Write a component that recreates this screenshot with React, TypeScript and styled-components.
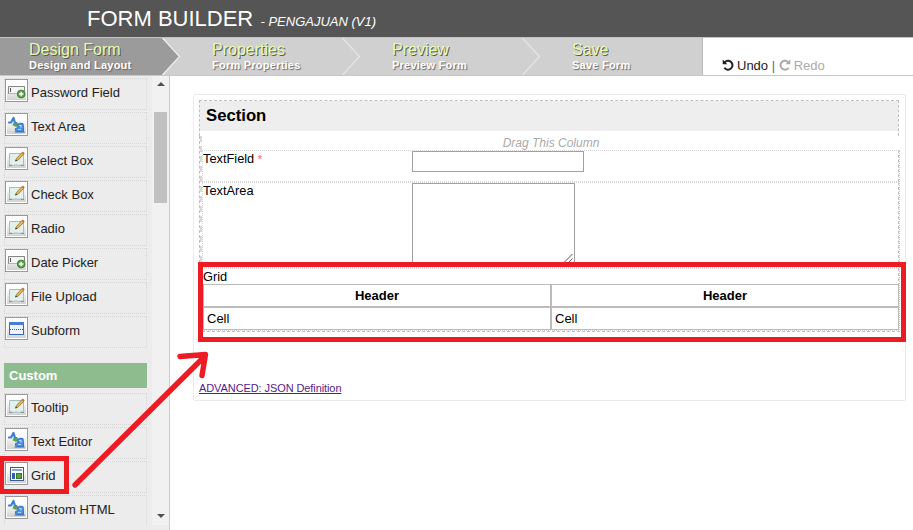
import React from "react";
import styled, { createGlobalStyle, css } from "styled-components";

const GlobalStyle = createGlobalStyle`
  * { box-sizing: border-box; }
  html, body { margin: 0; padding: 0; overflow: hidden; }
  body { background: #fff; color: #000; font-family: "Liberation Sans", Arial, sans-serif; font-size: 13px; }
`;

const Page = styled.div`
  position: relative;
  display: flex;
  flex-direction: column;
  width: 913px;
  height: 530px;
  overflow: hidden;
`;

const Header = styled.header`
  height: 37px;
  flex: none;
  padding-left: 87px;
  background: #555;
  color: #fff;
  font-size: 22px;
  line-height: 37px;
  white-space: pre;
`;

const FormName = styled.em`
  font-size: 13px;
`;

const Nav = styled.nav`
  display: flex;
  flex: none;
  height: 39px;
  border-top: 1px solid #c3c3c3;
  border-bottom: 1px solid #c8c8c8;
`;

const Step = styled.div<{ $width: number; $indent: number; $active?: boolean }>`
  display: flex;
  width: ${(p) => p.$width}px;
  padding-left: ${(p) => p.$indent}px;
  justify-content: space-between;
  background: ${(p) => (p.$active ? "#9b9b9b" : "#d0d0d0")};
`;

const StepText = styled.div`
  display: flex;
  flex-direction: column;
  padding-top: 3px;
  white-space: nowrap;
`;

const StepTitle = styled.span`
  color: #e9fbb0;
  font-size: 16px;
  line-height: 17px;
  text-shadow: 1px 1px 0 #555;
`;

const StepNote = styled.span`
  color: #fff;
  font-size: 11px;
  font-weight: bold;
  line-height: 14px;
  letter-spacing: 0.24px;
  text-shadow: 1px 1px 1px #666;
`;

const History = styled.div`
  display: flex;
  align-items: center;
  flex: 1;
  border-left: 1px solid #bbb;
  padding: 17px 0 0 19px;
  font-size: 13px;
  white-space: pre;
  color: #666;
`;

const HistoryButton = styled.span<{ $off?: boolean }>`
  display: flex;
  align-items: center;
  gap: 3px;
  color: ${(p) => (p.$off ? "#aaa" : "#222")};
`;

const Body = styled.div`
  display: flex;
  flex: 1;
  min-height: 0;
`;

const Sidebar = styled.aside`
  display: flex;
  flex: none;
  width: 170px;
  padding-bottom: 5px;
  background: #ececec;
  border-right: 1px solid #ccc;
`;

const Palette = styled.div`
  display: flex;
  flex-direction: column;
  gap: 2px;
  width: 152px;
  padding: 2px 5px 0 4px;
  overflow: hidden;
`;

const Tool = styled.div`
  display: flex;
  flex: none;
  height: 32px;
  border: 1px dotted #d6d6d6;
  font-size: 13px;
  line-height: 27px;
  color: #222;
  gap: 3px;
  white-space: nowrap;
`;

const ToolIcon = styled.span`
  display: flex;
  align-items: center;
  justify-content: center;
  flex: none;
  width: 23px;
  height: 23px;
  border: 1px solid #999;
  padding: 1px;
  background: linear-gradient(#fdfdfd 30%, #d2d2d2) content-box, #fff;
`;

const GroupTitle = styled.h2`
  flex: none;
  height: 25px;
  margin: 13px 0 3px;
  padding-left: 5px;
  background: #8fbc8f;
  color: #fff;
  font-size: 13px;
  line-height: 25px;
`;

const ScrollTrack = styled.div`
  display: flex;
  flex-direction: column;
  align-items: center;
  width: 17px;
  background: #f1f1f1;
`;

const ScrollArrow = styled.span<{ $down?: boolean }>`
  width: 0;
  height: 0;
  margin: ${(p) => (p.$down ? "auto 0 7px" : "6px 0 0")};
  border: 4px solid transparent;
  ${(p) =>
    p.$down
      ? css`border-top-color: #505050; border-bottom: 0;`
      : css`border-bottom-color: #505050; border-top: 0;`}
`;

const Thumb = styled.div`
  width: 13px;
  height: 91px;
  margin-top: 26px;
  background: #c1c1c1;
`;

const Main = styled.main`
  flex: 1;
  padding: 18px 8px 0 23px;
`;

const Canvas = styled.div`
  height: 307px;
  padding: 5px;
  border: 1px solid #ebebeb;
  border-radius: 2px;
`;

const SectionHead = styled.div`
  width: 700px;
  height: 36px;
  border: 1px dashed #c0c0c0;
  border-bottom: 0;
`;

const SectionTitle = styled.h1`
  height: 30px;
  margin: 0;
  padding-left: 6px;
  background: #eee;
  font-size: 16.7px;
  line-height: 29px;
`;

const Column = styled.div`
  width: 701px;
  border-left: 1px dashed #c0c0c0;
  padding-left: 0;
`;

const ColumnInner = styled.div`
  border-left: 2px dashed #d8d8d8;
`;

const DragHint = styled.div`
  height: 14px;
  color: #aaa;
  font-size: 12px;
  font-style: italic;
  line-height: 14px;
  text-align: center;
`;

const Fields = styled.div`
  border-right: 1px dotted #c8c8c8;
  border-bottom: 1px dashed #c0c0c0;
`;

const Field = styled.div<{ $height: number }>`
  display: flex;
  height: ${(p) => p.$height}px;
  border: 1px dotted #d6d6d6;
  border-right: 1px dashed #c0c0c0;
`;

const Label = styled.label`
  width: 209px;
  font-size: 12.8px;
  line-height: 15px;
`;

const Required = styled.span`
  color: #ff5a6a;
  font-size: 11px;
`;

const TextInput = styled.input`
  width: 172px;
  height: 21px;
  border: 1px solid #a0a0a0;
`;

const TextBox = styled.div`
  display: flex;
  align-items: flex-end;
  justify-content: flex-end;
  width: 163px;
  height: 82px;
  padding: 1px;
  border: 1px solid #a0a0a0;
`;

const GridField = styled(Field)`
  flex-direction: column;
`;

const GridTable = styled.div`
  display: grid;
  grid-template-columns: 348px 348px;
  grid-auto-rows: 23px;
`;

const GridCell = styled.div<{ $head?: boolean }>`
  border: 1px solid #bbb;
  padding: 0 3px;
  font-size: 13px;
  line-height: 21px;
  font-weight: ${(p) => (p.$head ? "bold" : "normal")};
  text-align: ${(p) => (p.$head ? "center" : "left")};
`;

const Advanced = styled.a`
  display: inline-block;
  margin-top: 50px;
  color: #551a8b;
  font-size: 11px;
  letter-spacing: -0.09px;
  text-decoration: underline;
`;

const RedBox = styled.div<{ $x: number; $y: number; $w: number; $h: number }>`
  position: absolute;
  left: ${(p) => p.$x}px;
  top: ${(p) => p.$y}px;
  width: ${(p) => p.$w}px;
  height: ${(p) => p.$h}px;
  border: 5px solid #ed1c24;
`;

const ArrowLayer = styled.svg`
  position: absolute;
  left: 0;
  top: 0;
  pointer-events: none;
`;

const StepArrow = ({ active }: { active?: boolean }) => (
  <svg width="19" height="37" viewBox="0 0 19 37">
    {active && <path d="M0 0H19V37H0L18 18.5Z" fill="#d0d0d0" />}
    <path d="M.5 0L17.5 18.5L.5 37" fill="none" stroke={active ? "#f0f0f0" : "#e6e6e6"} strokeWidth="1.2" />
  </svg>
);

const HistoryIcon = ({ flip }: { flip?: boolean }) => (
  <svg width="12" height="12" viewBox="0 0 12 12">
    <g transform={flip ? "translate(12 0) scale(-1 1)" : undefined}>
      <path d="M2.4 3.5A4.5 4.5 0 1 1 2.3 8.8" fill="none" stroke="currentColor" strokeWidth="2" />
      <path d="M.7 .6V5.3H5.4Z" fill="currentColor" />
    </g>
  </svg>
);

type IconKind = "input" | "text" | "edit" | "subform" | "grid";

const Glyph = ({ kind }: { kind: IconKind }) => {
  if (kind === "input")
    return (
      <svg width="19" height="19" viewBox="0 0 19 19">
        <path d="M1 5H18V13H1Z" fill="#f4f4f4" />
        <path d="M1.5 13V5.5H17.5V10" fill="none" stroke="#858585" />
        <path d="M3.5 7V11" stroke="#555" />
        <path d="M1.5 12.5H11" stroke="#b5b5b5" />
        <circle cx="14.2" cy="13" r="3.9" fill="#5aa046" stroke="#38752b" strokeWidth=".8" />
        <path d="M14.2 10.7V15.3M11.9 13H16.5" stroke="#fff" strokeWidth="1.5" />
      </svg>
    );
  if (kind === "text")
    return (
      <svg width="19" height="19" viewBox="0 0 19 19">
        <path d="M2 7.5H4L6.5 3L8 8H9.5" fill="none" stroke="#3e7fd0" strokeWidth="2.2" strokeLinecap="round" strokeLinejoin="round" />
        <path d="M6 9L9 10.5L11 9" fill="none" stroke="#5da64c" strokeWidth="2.6" />
        <path d="M10.5 9.5Q12 7.5 16 8.5L16.5 12.5V16.5H10.5Q7.5 16 8.5 13.5L11 12.5Z" fill="#4c90df" stroke="#2f72c8" strokeLinejoin="round" />
        <path d="M12 10.5H14V12.5M11 14.5H14" fill="none" stroke="#b4d6fa" strokeWidth="1.2" />
        <path d="M7.5 17H17.5" stroke="#3478cc" strokeWidth="1.2" />
      </svg>
    );
  if (kind === "edit")
    return (
      <svg width="19" height="19" viewBox="0 0 19 19">
        <path d="M2.5 4.5H16.5V16.5L14.5 15.8L12 16.5L9 15.8L6 16.5L4 15.8L2.5 16.5Z" fill="#e3f1ee" stroke="#a7bcbc" />
        <path d="M2 16.5H5M14 16.5H17" stroke="#7e9998" />
        <path d="M8.7 12L9.3 9.8L15 3.5L16.8 5.2L11 11.2Z" fill="#edbd4c" stroke="#8f6a2b" strokeWidth=".8" />
        <path d="M14.7 3.7L15.9 2.5L17.8 4.2L16.7 5.4Z" fill="#bd704c" />
        <path d="M8.2 12.5L10 11.7L8.9 10.5Z" fill="#333" />
      </svg>
    );
  if (kind === "subform")
    return (
      <svg width="19" height="19" viewBox="0 0 19 19">
        <rect x="2.5" y="3.5" width="14" height="12" fill="#eef3fb" stroke="#3867b3" />
        <path d="M2 4.5H17" stroke="#477fd1" strokeWidth="3" />
        <path d="M3 10.5H16" stroke="#555" strokeDasharray="1 1" />
      </svg>
    );
  return (
    <svg width="19" height="19" viewBox="0 0 19 19">
      <rect x="3.5" y="3.5" width="13" height="13" fill="#fff" stroke="#3c5791" />
      <rect x="5" y="5" width="10" height="2" fill="#83a9dc" />
      <rect x="5" y="9" width="3" height="6" fill="#315eae" />
      <rect x="9.5" y="9.5" width="5" height="5" fill="#55a447" stroke="#347a2d" />
    </svg>
  );
};

const basicTools: [string, IconKind][] = [
  ["Password Field", "input"],
  ["Text Area", "text"],
  ["Select Box", "edit"],
  ["Check Box", "edit"],
  ["Radio", "edit"],
  ["Date Picker", "input"],
  ["File Upload", "edit"],
  ["Subform", "subform"],
];

const customTools: [string, IconKind][] = [
  ["Tooltip", "edit"],
  ["Text Editor", "text"],
  ["Grid", "grid"],
  ["Custom HTML", "text"],
];

const steps = [
  { title: "Design Form", note: "Design and Layout", width: 181, indent: 29, active: true },
  { title: "Properties", note: "Form Properties", width: 180, indent: 31 },
  { title: "Preview", note: "Preview Form", width: 180, indent: 31 },
  { title: "Save", note: "Save Form", width: 161, indent: 31 },
];

const ToolItem = ({ name, kind }: { name: string; kind: IconKind }) => (
  <Tool>
    <ToolIcon><Glyph kind={kind} /></ToolIcon>
    {name}
  </Tool>
);

export default function App() {
  return (
    <Page>
      <GlobalStyle />
      <Header>FORM BUILDER<FormName>{"  - PENGAJUAN (V1)"}</FormName></Header>
      <Nav>
        {steps.map((s, i) => (
          <Step key={s.title} $width={s.width} $indent={s.indent} $active={s.active}>
            <StepText>
              <StepTitle>{s.title}</StepTitle>
              <StepNote>{s.note}</StepNote>
            </StepText>
            {i < 3 && <StepArrow active={s.active} />}
          </Step>
        ))}
        <History>
          <HistoryButton><HistoryIcon />Undo</HistoryButton>
          {" | "}
          <HistoryButton $off><HistoryIcon flip />Redo</HistoryButton>
        </History>
      </Nav>
      <Body>
        <Sidebar>
          <Palette>
            {basicTools.map(([name, kind]) => <ToolItem key={name} name={name} kind={kind} />)}
            <GroupTitle>Custom</GroupTitle>
            {customTools.map(([name, kind]) => <ToolItem key={name} name={name} kind={kind} />)}
          </Palette>
          <ScrollTrack>
            <ScrollArrow />
            <Thumb />
            <ScrollArrow $down />
          </ScrollTrack>
        </Sidebar>
        <Main>
          <Canvas>
            <SectionHead><SectionTitle>Section</SectionTitle></SectionHead>
            <Column>
              <ColumnInner>
                <DragHint>Drag This Column</DragHint>
                <Fields>
                  <Field $height={32}>
                    <Label>TextField <Required>*</Required></Label>
                    <TextInput />
                  </Field>
                  <Field $height={86}>
                    <Label>TextArea</Label>
                    <TextBox>
                      <svg width="9" height="9" viewBox="0 0 9 9">
                        <path d="M0 8.5L8.5 0M4.5 8.5L8.5 4.5" stroke="#555" />
                      </svg>
                    </TextBox>
                  </Field>
                  <GridField $height={63}>
                    <Label>Grid</Label>
                    <GridTable>
                      <GridCell $head>Header</GridCell>
                      <GridCell $head>Header</GridCell>
                      <GridCell>Cell</GridCell>
                      <GridCell>Cell</GridCell>
                    </GridTable>
                  </GridField>
                </Fields>
              </ColumnInner>
            </Column>
            <Advanced>ADVANCED: JSON Definition</Advanced>
          </Canvas>
        </Main>
      </Body>
      <RedBox $x={198} $y={262} $w={708} $h={80} />
      <RedBox $x={-1} $y={456} $w={70} $h={38} />
      <ArrowLayer width="913" height="530" viewBox="0 0 913 530">
        <path d="M75 485L204 357M180 356.5L205.5 354.5L202 375.5" fill="none" stroke="#ed1c24" strokeWidth="5.4" strokeLinecap="round" strokeLinejoin="round" />
      </ArrowLayer>
    </Page>
  );
}
